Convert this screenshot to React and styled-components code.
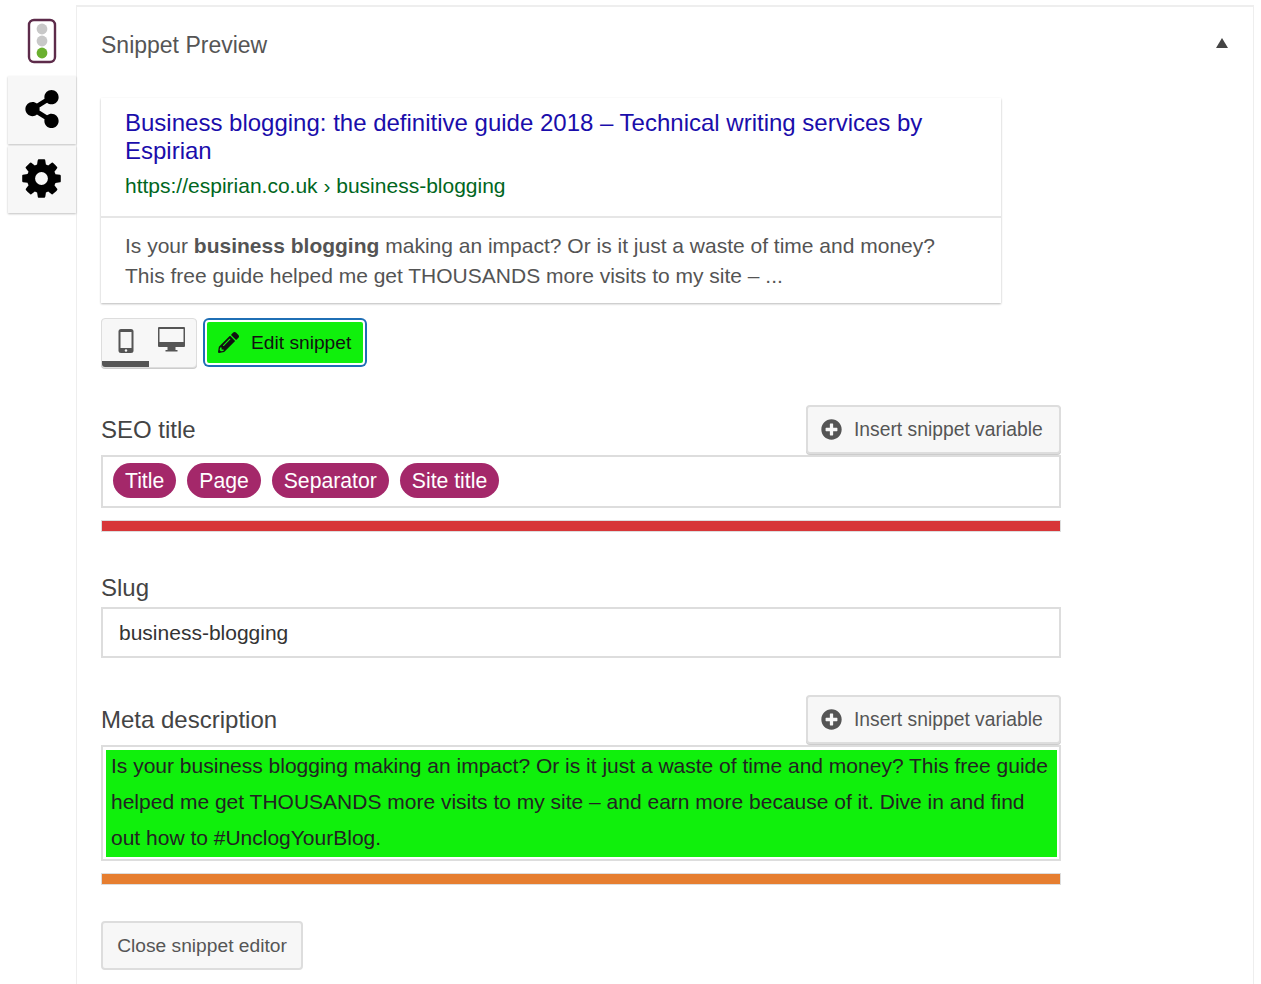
import React from 'react';
import styled, { createGlobalStyle } from 'styled-components';
import { FaShareAlt, FaPencilAlt, FaPlusCircle } from 'react-icons/fa';

const GlobalStyle = createGlobalStyle`
  html, body {
    margin: 0;
    padding: 0;
    height: 984px;
    overflow: hidden;
    background: #fff;
    font-family: "Liberation Sans", Arial, sans-serif;
    color: #444;
  }
`;

const Page = styled.div`
  display: flex;
  align-items: flex-start;
  padding: 5px 7px 0 8px;
  height: 979px;
  box-sizing: content-box;
`;

const Sidebar = styled.nav`
  width: 68px;
  flex: none;
  display: flex;
  flex-direction: column;
  gap: 2px;
  z-index: 1;
`;

const Tab = styled.div`
  height: ${(p) => p.$height}px;
  box-sizing: border-box;
  display: flex;
  align-items: center;
  justify-content: center;
  padding: ${(p) => p.$pad || '0'};
  background: ${(p) => (p.$active ? '#fff' : '#f7f7f7')};
  color: #000;
  box-shadow: ${(p) => (p.$active ? 'none' : '0 1px 2px rgba(0, 0, 0, 0.25)')};
`;

const Panel = styled.main`
  flex: 1;
  height: 984px;
  box-sizing: border-box;
  border-top: 2px solid #eee;
  border-left: 1px solid #eee;
  border-right: 1px solid #eee;
  padding: 0 0 0 24px;
`;

const PanelHeader = styled.header`
  height: 91px;
  display: flex;
  align-items: flex-start;
  justify-content: space-between;
`;

const PanelTitle = styled.h2`
  margin: 24px 0 0;
  font-size: 23px;
  line-height: 28px;
  font-weight: 400;
  color: #555;
`;

const Caret = styled.span`
  width: 0;
  height: 0;
  margin: 31px 25px 0 0;
  border-left: 6px solid transparent;
  border-right: 6px solid transparent;
  border-bottom: 10px solid #444;
`;

const SnippetCard = styled.section`
  width: 900px;
  height: 205px;
  box-sizing: border-box;
  background: #fff;
  box-shadow: 0 1px 2px rgba(0, 0, 0, 0.28);
`;

const SnippetHead = styled.div`
  height: 120px;
  box-sizing: border-box;
  padding: 11px 24px 0;
  border-bottom: 2px solid #e6e6e6;
`;

const SnippetTitle = styled.div`
  font-size: 24px;
  line-height: 28px;
  color: #1a0dab;
`;

const SnippetUrl = styled.div`
  margin-top: 8px;
  font-size: 21px;
  line-height: 26px;
  color: #006621;
`;

const SnippetBody = styled.div`
  padding: 13px 24px 0;
  font-size: 21px;
  line-height: 30px;
  color: #545454;
`;

const Controls = styled.div`
  display: flex;
  align-items: flex-start;
  gap: 7px;
  margin-top: 15px;
`;

const DeviceToggle = styled.div`
  width: 96px;
  height: 50px;
  box-sizing: border-box;
  display: flex;
  border: 1px solid #ddd;
  border-radius: 4px;
  background: #f7f7f7;
  box-shadow: 0 1px 0 #ccc;
  overflow: hidden;
`;

const DeviceButton = styled.div`
  width: 50%;
  box-sizing: border-box;
  display: flex;
  justify-content: center;
  padding: ${(p) => p.$pad};
  color: #555;
  border-bottom: 6px solid ${(p) => (p.$active ? '#555' : 'transparent')};
`;

const EditButton = styled.button`
  width: 160px;
  height: 45px;
  box-sizing: border-box;
  display: flex;
  align-items: center;
  gap: 12px;
  padding: 0 0 0 11px;
  font: 19.2px "Liberation Sans", Arial, sans-serif;
  color: #111;
  background: #10f00c;
  border: 2px solid #fff;
  border-radius: 4px;
  box-shadow: 0 0 0 2px #1f6fb5;
  margin: 2px 0 0 1px;
`;

const FieldBlock = styled.div`
  width: 960px;
  margin-top: ${(p) => p.$top}px;
`;

const FieldHead = styled.div`
  display: flex;
  align-items: flex-end;
  justify-content: space-between;
  height: ${(p) => p.$height}px;
  margin-bottom: ${(p) => p.$gap || 0}px;
`;

const FieldLabel = styled.label`
  font-size: 24px;
  line-height: 28px;
  color: #444;
  padding-bottom: ${(p) => p.$pad}px;
`;

const InsertButton = styled.button`
  width: 255px;
  height: 49px;
  box-sizing: border-box;
  display: flex;
  align-items: center;
  gap: 12px;
  padding: 0 0 0 13px;
  font: 19.3px "Liberation Sans", Arial, sans-serif;
  color: #555;
  background: #f7f7f7;
  border: 2px solid #ddd;
  border-radius: 4px;
  box-shadow: 0 1px 0 #ccc;
`;

const TitleInput = styled.div`
  height: 53px;
  box-sizing: border-box;
  display: flex;
  align-items: center;
  gap: 11px;
  padding: 0 0 2px 10px;
  border: 2px solid #ddd;
`;

const Pill = styled.span`
  height: 35px;
  display: flex;
  align-items: center;
  padding: 0 12px;
  border-radius: 18px;
  background: #a4286a;
  color: #fff;
  font-size: 21.2px;
`;

const ProgressBar = styled.div`
  height: 10px;
  margin-top: 12px;
  background: ${(p) => p.$color};
  border: 1px solid #ddd;
`;

const SlugInput = styled.div`
  height: 51px;
  box-sizing: border-box;
  display: flex;
  align-items: center;
  padding-left: 16px;
  border: 2px solid #ddd;
  font-size: 21px;
  color: #333;
`;

const DescriptionInput = styled.div`
  box-sizing: border-box;
  padding: 3px 2px 2px 3px;
  border: 2px solid #ddd;
`;

const DescriptionBox = styled.div`
  height: 107px;
  padding: 0 5px;
  background: #10f00c;
  overflow: hidden;
`;

const DescriptionText = styled.p`
  margin: -2px 0 0;
  font-size: 21px;
  line-height: 36px;
  color: #222;
`;

const CloseButton = styled.button`
  display: block;
  width: 202px;
  height: 49px;
  margin-top: 36px;
  box-sizing: border-box;
  font: 19.2px "Liberation Sans", Arial, sans-serif;
  color: #555;
  background: #f7f7f7;
  border: 2px solid #ddd;
  border-radius: 4px;
  padding: 0;
`;

function TrafficLight() {
  return (
    <svg width="30" height="46" viewBox="0 0 30 46">
      <rect x="2" y="2" width="26" height="42" rx="5" fill="#fff" stroke="#5d2b4a" strokeWidth="2.4" />
      <circle cx="15" cy="11" r="5.4" fill="#c8c8c8" />
      <circle cx="15" cy="23" r="5.4" fill="#c8c8c8" />
      <circle cx="15" cy="35" r="5.4" fill="#6ab02f" />
    </svg>
  );
}

function Gear() {
  return (
    <svg width="45" height="45" viewBox="0 0 1792 1792" fill="currentColor">
      <path d="M1152 896q0-106-75-181t-181-75-181 75-75 181 75 181 181 75 181-75 75-181zm512-109v222q0 12-8 23t-20 13l-185 28q-19 54-39 91 35 50 107 138 10 12 10 25t-9 23q-27 37-99 108t-94 71q-12 0-26-9l-138-108q-44 23-91 38-16 136-29 186-7 28-36 28h-222q-14 0-24.5-8.5t-11.5-21.5l-28-184q-49-16-90-37l-141 107q-10 9-25 9-14 0-25-11-126-114-165-168-7-10-7-23 0-12 8-23 15-21 51-66.5t54-70.5q-27-50-41-99l-183-27q-13-2-21-12.5t-8-23.5v-222q0-12 8-23t19-13l186-28q14-46 39-92-40-57-107-138-10-12-10-24 0-10 9-23 26-36 98.5-107.5t94.5-71.5q13 0 26 10l138 107q44-23 91-38 16-136 29-186 7-28 36-28h222q14 0 24.5 8.5t11.5 21.5l28 184q49 16 90 37l142-107q9-9 24-9 13 0 25 10 129 119 165 170 7 8 7 22 0 12-8 23-15 21-51 66.5t-54 70.5q26 50 41 98l183 28q13 2 21 12.5t8 23.5z" />
    </svg>
  );
}

function MobileIcon() {
  return (
    <svg width="16" height="24" viewBox="0 0 16 24">
      <rect x="0.5" y="0" width="15" height="24" rx="2.5" fill="#555" />
      <rect x="2.5" y="3" width="11" height="16" fill="#f7f7f7" />
      <circle cx="8" cy="21.5" r="1.2" fill="#f7f7f7" />
    </svg>
  );
}

function DesktopIcon() {
  return (
    <svg width="27" height="25" viewBox="0 0 27 25">
      <rect x="0" y="0" width="27" height="20" rx="1" fill="#555" />
      <rect x="1.5" y="2" width="24" height="13" fill="#f7f7f7" />
      <rect x="9.5" y="20" width="8" height="3" fill="#555" />
      <rect x="7.5" y="23" width="12" height="1.5" fill="#555" />
    </svg>
  );
}

export default function App() {
  return (
    <Page>
      <GlobalStyle />
      <Sidebar>
        <Tab $active $height={69} $pad="2px 0 0"><TrafficLight /></Tab>
        <Tab $height={68} $pad="0 0 3px"><FaShareAlt size={38} /></Tab>
        <Tab $height={67} $pad="0 1px 2px 0"><Gear /></Tab>
      </Sidebar>
      <Panel>
        <PanelHeader>
          <PanelTitle>Snippet Preview</PanelTitle>
          <Caret />
        </PanelHeader>
        <SnippetCard>
          <SnippetHead>
            <SnippetTitle>Business blogging: the definitive guide 2018 – Technical writing services by Espirian</SnippetTitle>
            <SnippetUrl>https://espirian.co.uk › business-blogging</SnippetUrl>
          </SnippetHead>
          <SnippetBody>
            Is your <b>business blogging</b> making an impact? Or is it just a waste of time and money?<br />
            This free guide helped me get THOUSANDS more visits to my site – ...
          </SnippetBody>
        </SnippetCard>
        <Controls>
          <DeviceToggle>
            <DeviceButton $active $pad="10px 0 0"><MobileIcon /></DeviceButton>
            <DeviceButton $pad="8px 2px 0 0"><DesktopIcon /></DeviceButton>
          </DeviceToggle>
          <EditButton><FaPencilAlt size={21} />Edit snippet</EditButton>
        </Controls>
        <FieldBlock $top={36}>
          <FieldHead $height={50} $gap={1}>
            <FieldLabel $pad={10}>SEO title</FieldLabel>
            <InsertButton><FaPlusCircle size={21} />Insert snippet variable</InsertButton>
          </FieldHead>
          <TitleInput>
            <Pill>Title</Pill>
            <Pill>Page</Pill>
            <Pill>Separator</Pill>
            <Pill>Site title</Pill>
          </TitleInput>
          <ProgressBar $color="#d73638" />
        </FieldBlock>
        <FieldBlock $top={40}>
          <FieldHead $height={35}>
            <FieldLabel $pad={5}>Slug</FieldLabel>
          </FieldHead>
          <SlugInput>business-blogging</SlugInput>
        </FieldBlock>
        <FieldBlock $top={37}>
          <FieldHead $height={49} $gap={1}>
            <FieldLabel $pad={10}>Meta description</FieldLabel>
            <InsertButton><FaPlusCircle size={21} />Insert snippet variable</InsertButton>
          </FieldHead>
          <DescriptionInput>
            <DescriptionBox>
              <DescriptionText>
                Is your business blogging making an impact? Or is it just a waste of time and money? This free guide helped me get THOUSANDS more visits to my site – and earn more because of it. Dive in and find out how to #UnclogYourBlog.
              </DescriptionText>
            </DescriptionBox>
          </DescriptionInput>
          <ProgressBar $color="#e67e30" />
        </FieldBlock>
        <CloseButton>Close snippet editor</CloseButton>
      </Panel>
    </Page>
  );
}
